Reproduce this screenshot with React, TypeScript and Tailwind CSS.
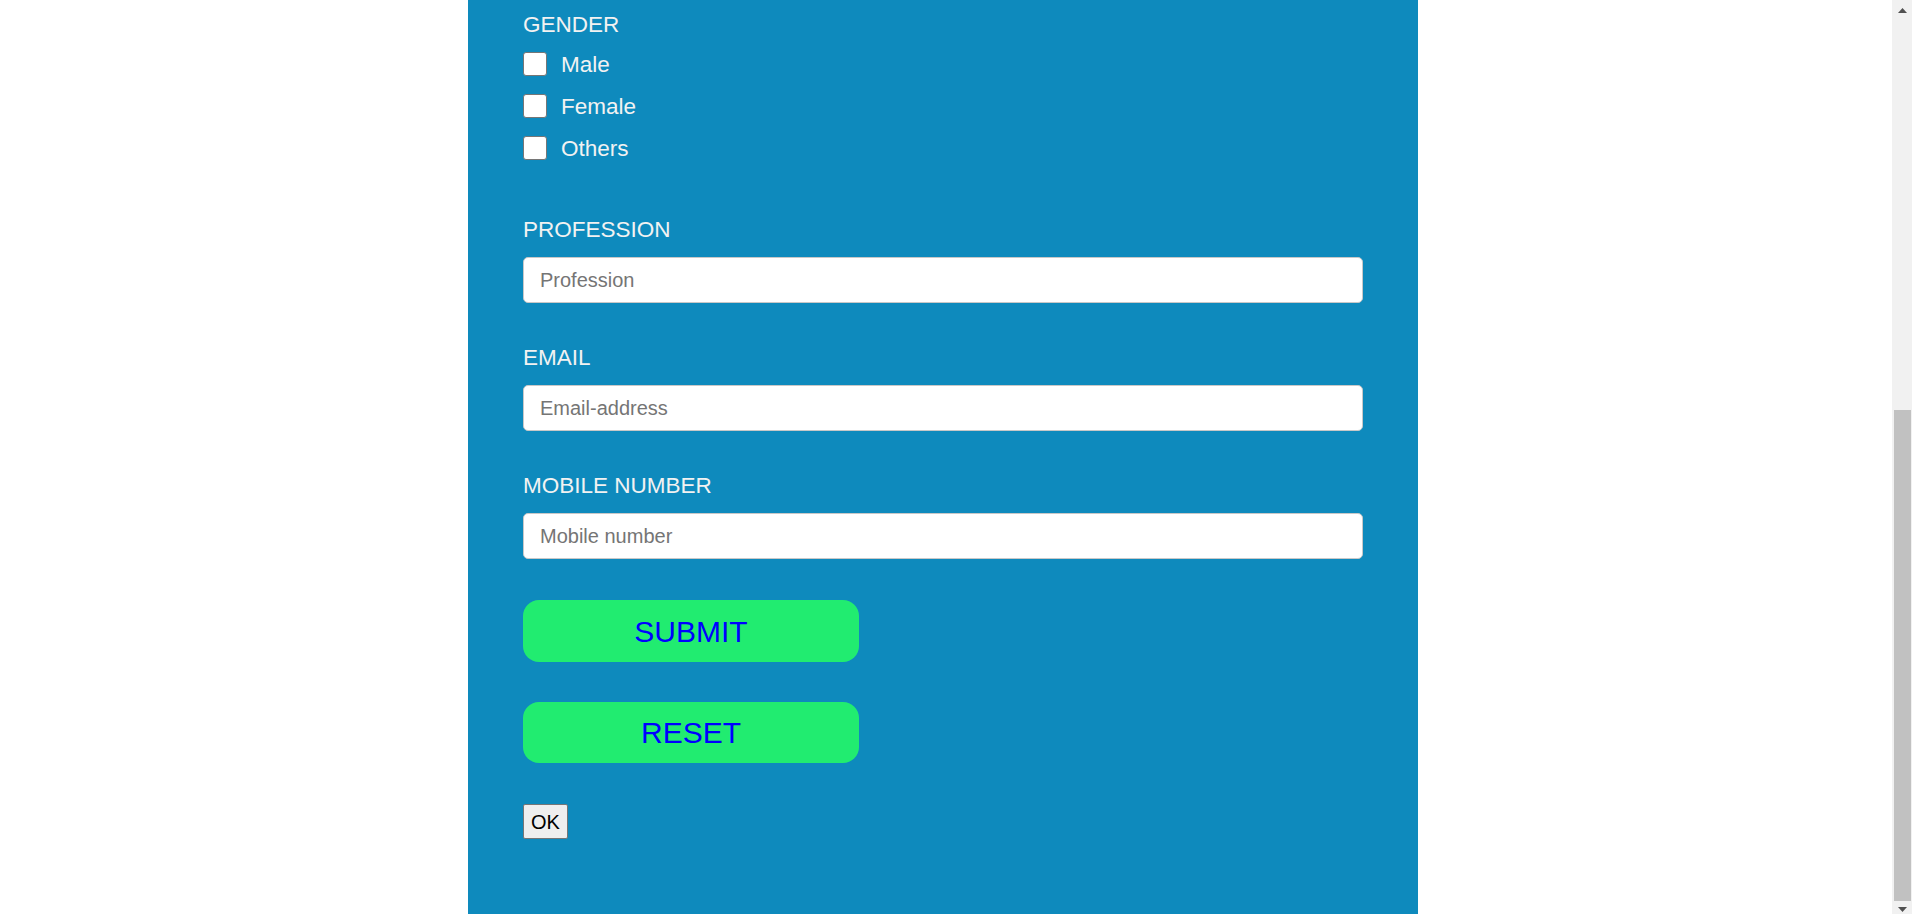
import { useEffect } from 'react'

const FONT = "font-['Liberation_Sans',Arial,sans-serif]"

// fields above the fold; the page opens scrolled to the bottom
const TOP_FIELDS = [
  { label: 'FIRST NAME', placeholder: 'First name' },
  { label: 'LAST NAME', placeholder: 'Last name' },
  { label: 'USERNAME', placeholder: 'Username' },
  { label: 'PASSWORD', placeholder: 'Password' },
]

const BOTTOM_FIELDS = [
  { label: 'PROFESSION', placeholder: 'Profession' },
  { label: 'EMAIL', placeholder: 'Email-address' },
  { label: 'MOBILE NUMBER', placeholder: 'Mobile number' },
]

function Field({ label, placeholder }: { label: string; placeholder: string }) {
  return (
    <div className="flex flex-col mb-[42px]">
      <label className="text-[22.5px] leading-[25px] text-[#f2f2f2]">{label}</label>
      <input
        type="text"
        placeholder={placeholder}
        className="mt-[15px] w-[840px] h-[46px] px-4 rounded-[5px] border border-[#c8c8c8] bg-white text-[20px] text-[#222] placeholder:text-[#757575] outline-none"
      />
    </div>
  )
}

// the window scrollbar as it shows in the reference (headless hides the real one)
function FakeScrollbar() {
  return (
    <div aria-hidden className="fixed top-0 right-0 h-screen w-[20px] bg-[#f1f1f1] flex flex-col pointer-events-none">
      <div className="h-[17px] flex items-start justify-center pt-[8px]">
        <svg width="9" height="5" viewBox="0 0 9 5">
          <path d="M4.5 0 L9 5 L0 5 Z" fill="#505050" />
        </svg>
      </div>
      <div className="h-[393px]" />
      <div className="h-[491px] ml-[2px] mr-[1px] bg-[#c1c1c1]" />
      <div className="flex-1 flex items-start justify-center pt-[6px]">
        <svg width="9" height="5" viewBox="0 0 9 5">
          <path d="M0 0 L9 0 L4.5 5 Z" fill="#505050" />
        </svg>
      </div>
    </div>
  )
}

export default function App() {
  useEffect(() => {
    window.scrollTo(0, document.documentElement.scrollHeight)
  }, [])

  return (
    <div className={`min-h-screen bg-white ${FONT}`}>
      <form
        className="ml-[468px] w-[950px] bg-[#0e8abd] px-[55px] pt-[60px] pb-[75px] flex flex-col items-start"
        onSubmit={(e) => e.preventDefault()}
      >
        <h1 className="text-[36px] leading-[42px] text-[#f2f2f2] mb-[40px]">REGISTRATION FORM</h1>

        {TOP_FIELDS.map((f) => (
          <Field key={f.label} {...f} />
        ))}

        {/* Gender */}
        <div className="flex flex-col">
          <span className="text-[22.5px] leading-[25px] text-[#f2f2f2]">GENDER</span>
          <div className="mt-[6px] flex flex-col">
            {['Male', 'Female', 'Others'].map((g) => (
              <label key={g} className="h-[42px] flex items-center gap-[14px] cursor-pointer">
                <input
                  type="checkbox"
                  className="appearance-none w-6 h-6 bg-white border border-[#767676] rounded-[3px] checked:bg-[#0075ff]"
                />
                <span className="text-[22.5px] leading-[25px] text-[#f2f2f2]">{g}</span>
              </label>
            ))}
          </div>
        </div>

        <div className="mt-[48px]">
          {BOTTOM_FIELDS.map((f) => (
            <Field key={f.label} {...f} />
          ))}
        </div>

        <button
          type="submit"
          className="mt-[-1px] w-[336px] h-[62px] rounded-[16px] bg-[#21ec70] text-[30px] text-[#0000ff]"
        >
          SUBMIT
        </button>
        <button
          type="reset"
          className="mt-[40px] w-[336px] h-[61px] rounded-[16px] bg-[#21ec70] text-[30px] text-[#0000ff]"
        >
          RESET
        </button>

        <button
          type="button"
          className="mt-[41px] h-[35px] px-[7px] bg-[#efefef] border border-[#767676] rounded-[2px] text-[20px] leading-none text-black"
        >
          OK
        </button>
      </form>
      <FakeScrollbar />
    </div>
  )
}
